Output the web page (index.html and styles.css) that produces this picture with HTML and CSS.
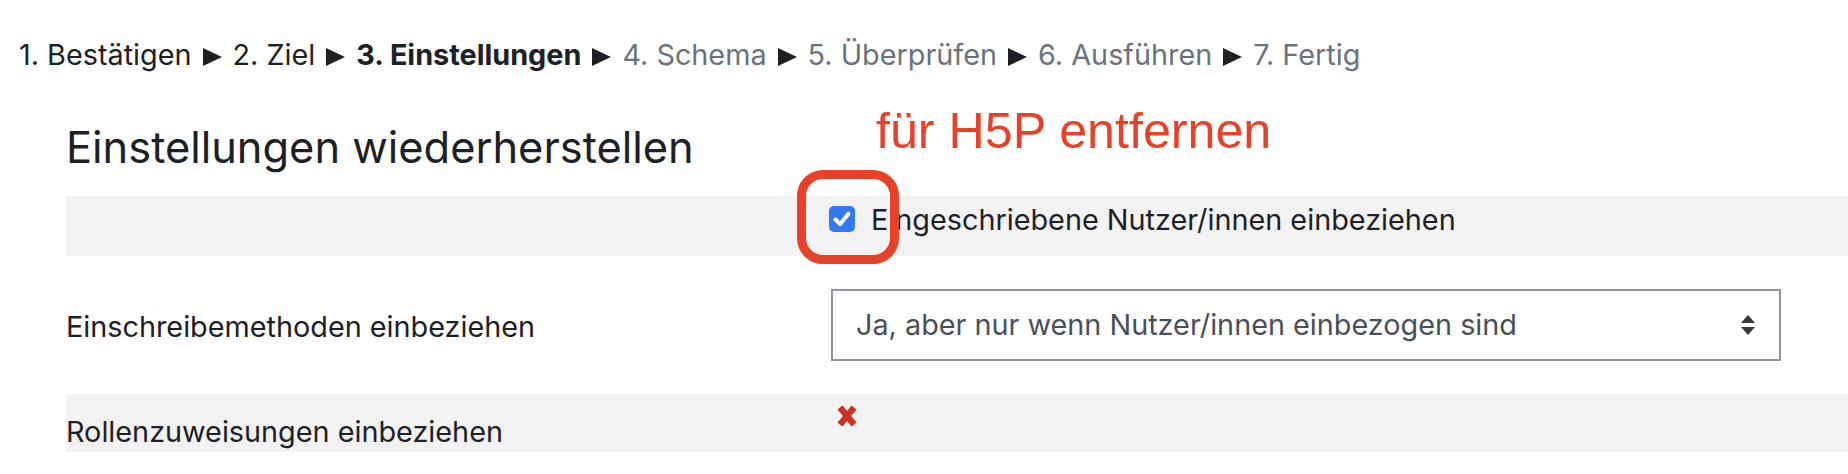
FILE: index.html
```html
<!DOCTYPE html>
<html lang="de">
<head>
<meta charset="utf-8">
<title>Einstellungen wiederherstellen</title>
<link rel="stylesheet" href="styles.css">
</head>
<body>
<nav class="steps"><span class="step">1. Bestätigen</span><svg class="sep" width="19" height="18" viewBox="0 0 19 18"><polygon points="0,0 19,9 0,18"/></svg><span class="step">2. Ziel</span><svg class="sep" width="19" height="18" viewBox="0 0 19 18"><polygon points="0,0 19,9 0,18"/></svg><span class="step current">3. Einstellungen</span><svg class="sep" width="19" height="18" viewBox="0 0 19 18"><polygon points="0,0 19,9 0,18"/></svg><span class="step future">4. Schema</span><svg class="sep" width="19" height="18" viewBox="0 0 19 18"><polygon points="0,0 19,9 0,18"/></svg><span class="step future">5. Überprüfen</span><svg class="sep" width="19" height="18" viewBox="0 0 19 18"><polygon points="0,0 19,9 0,18"/></svg><span class="step future">6. Ausführen</span><svg class="sep" width="19" height="18" viewBox="0 0 19 18"><polygon points="0,0 19,9 0,18"/></svg><span class="step future">7. Fertig</span></nav>
<main class="page">
  <h2 class="title">Einstellungen wiederherstellen</h2>
  <div class="row shaded row-check">
    <div class="label"></div>
    <div class="field">
      <span class="checkbox"><svg width="26" height="26" viewBox="0 0 26 26"><path d="M6.5 13.5 L11 18.2 L19.5 7.8" fill="none" stroke="#fff" stroke-width="4" stroke-linecap="round" stroke-linejoin="round"/></svg></span>
      <span class="text">Eingeschriebene Nutzer/innen einbeziehen</span>
    </div>
  </div>
  <div class="row row-select">
    <div class="label">Einschreibemethoden einbeziehen</div>
    <div class="field">
      <div class="select">
        <span class="value">Ja, aber nur wenn Nutzer/innen einbezogen sind</span>
        <svg class="arrows" width="14" height="20" viewBox="0 0 14 20"><polygon points="7,0 14,8 0,8"/><polygon points="0,12 14,12 7,20"/></svg>
      </div>
    </div>
  </div>
  <div class="row shaded row-icon">
    <div class="label">Rollenzuweisungen einbeziehen</div>
    <div class="field">
      <svg class="cross" width="20" height="22" viewBox="0 0 20 22"><path d="M3 2.5 L17 19.5 M17 2.5 L3 19.5" stroke="#ca3120" stroke-width="6.5" stroke-linecap="butt"/></svg>
    </div>
  </div>
</main>
<div class="note">für H5P entfernen</div>
<div class="highlight"></div>
</body>
</html>
```

FILE: styles.css
```css
html, body {
  margin: 0;
  padding: 0;
  background: #ffffff;
}
body {
  font-family: Inter, "Noto Sans", "DejaVu Sans", sans-serif;
  color: #1d2125;
  font-size: 28.8px;
  line-height: 40px;
  width: 1848px;
  height: 474px;
  overflow: hidden;
  position: relative;
}
.steps {
  padding: 35px 0 0 19px;
  height: 40px;
  white-space: nowrap;
}
.step.current {
  font-weight: 700;
}
.step.future {
  color: #6a737b;
}
.sep {
  fill: #1d2125;
  vertical-align: -1px;
  margin: 0 11px 0 11px;
}
.page {
  padding-left: 66px;
}
.title {
  margin: 46px 0 0 0;
  font-size: 43.4px;
  line-height: 52px;
  font-weight: 400;
}
.row {
  display: grid;
  grid-template-columns: 764px 1fr;
}
.shaded {
  background: #f2f2f2;
}
.row-check {
  margin-top: 23px;
  padding: 4px 0 16px 0;
}
.row-check .field {
  display: flex;
  align-items: flex-start;
}
.checkbox {
  width: 26px;
  height: 26px;
  margin: 6px 16px 0 -1px;
  background: #3478f6;
  border-radius: 5px;
  display: flex;
}
.row-select {
  margin-top: 33px;
}
.row-select .label {
  padding-top: 18px;
}
.select {
  box-sizing: border-box;
  width: 950px;
  height: 72px;
  margin-left: 1px;
  border: 2px solid #8f959e;
  display: flex;
  align-items: center;
  justify-content: space-between;
  padding: 0 24px 0 23px;
  color: #495057;
}
.arrows {
  fill: #343a40;
}
.row-icon {
  margin-top: 33px;
}
.row-icon .label {
  padding-top: 18px;
}
.row-icon .field {
  padding: 11px 0 0 7px;
}
.cross {
  display: block;
}
.note {
  position: absolute;
  left: 876px;
  top: 106px;
  font-family: "Liberation Sans", Arial, sans-serif;
  font-size: 50.2px;
  line-height: 50px;
  color: #e8412a;
  white-space: nowrap;
}
.highlight {
  position: absolute;
  left: 797px;
  top: 170px;
  width: 84px;
  height: 76px;
  border: 9px solid #e8412a;
  border-radius: 26px;
}
```
